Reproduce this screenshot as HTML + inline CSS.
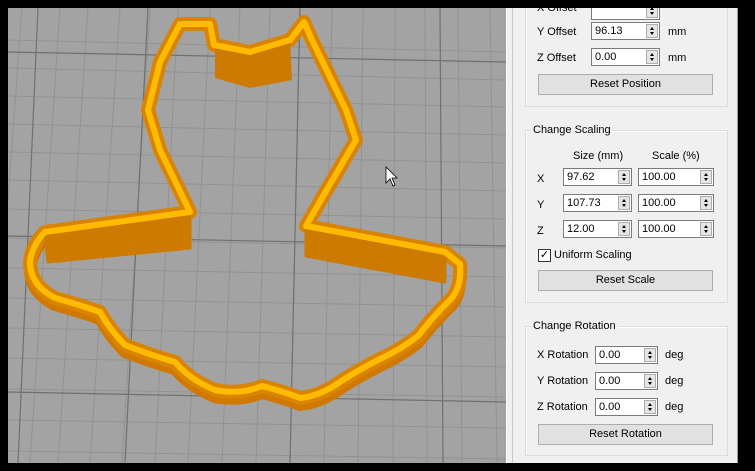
<!DOCTYPE html>
<html><head><style>
body{margin:0;width:755px;height:471px;background:#000;position:relative;overflow:hidden;font-family:"Liberation Sans",sans-serif;font-size:11px;color:#000}
.a{position:absolute}
#vp{left:8px;top:8px;width:498px;height:455px;background:#a3a3a3;overflow:hidden}
#pn{left:506px;top:8px;width:231px;height:455px;background:#f0f0f0;border-right:1px solid #999}
.g{position:absolute;border:1px solid #dcdcdc;box-shadow:inset 1px 1px 0 #fff}
.gl{position:absolute;background:#f0f0f0;padding:0 2px}
.in{position:absolute;background:#fff;border:1px solid #7a7a7a;height:18px;box-sizing:border-box;line-height:16px;padding-left:3px;font-size:11px}
.sp{position:absolute;right:1px;top:1px;width:12px;height:14px;border:1px solid #adadad;background:#e5e5e5;box-sizing:border-box}
.sp:before{content:"";position:absolute;left:3px;top:2px;border:2.5px solid transparent;border-bottom:3px solid #000;border-top:0}
.sp:after{content:"";position:absolute;left:3px;top:7px;border:2.5px solid transparent;border-top:3px solid #000;border-bottom:0}
.bt{position:absolute;left:32px;width:175px;height:21px;border:1px solid #adadad;background:#e1e1e1;box-sizing:border-box;text-align:center;line-height:19px;font-size:11px}
.t{position:absolute;font-size:11px}
</style></head><body>
<div id="vp" class="a">
<svg width="498" height="455" viewBox="8 8 498 455" style="position:absolute;left:0;top:0">
<g stroke="#929292" stroke-width="1" fill="none">
<path d="M22 8 L8 200 M60 8 L30 463 M120 8 L90 463 M178 8 L155 463 M240 8 L222 463 M300 8 L290 463 M363 8 L358 463 M425 8 L427 463 M490 8 L497 463 M88 8 L58 463 M150 8 L122 463 M210 8 L188 463 M270 8 L256 463 M332 8 L324 463 M395 8 L393 463 M458 8 L462 463"/>
<path d="M8 40 L506 52 M8 68 L506 80 M8 96 L506 107 M8 124 L506 135 M8 152 L506 163 M8 180 L506 191 M8 209 L506 219 M8 238 L506 248 M8 268 L506 277 M8 298 L506 307 M8 328 L506 337 M8 358 L506 367 M8 389 L506 397 M8 420 L506 428 M8 451 L506 459"/>
</g>
<g stroke="#707070" stroke-width="1.2" fill="none"><path d="M38 8 L18 463 M148 8 L125 463 M300 8 L290 463 M440 8 L443 463 M8 52 L506 62 M8 236 L506 246 M8 392 L506 402"/></g>
<g fill="none" stroke-linejoin="round" stroke-linecap="round">
<path d="M45 232 Q32 245 30 262 Q30 285 55 298 Q80 305 100 312 Q110 330 125 345 Q150 355 175 362 Q190 380 215 390 Q240 395 262 386 Q285 392 300 398 Q320 396 340 382 Q355 372 378 360 Q400 350 418 336 Q432 318 448 302 Q462 290 460 264" stroke="#d07800" stroke-width="12" transform="translate(0,7)"/>
<path d="M190 212 L45 232 Q32 245 30 262 Q30 285 55 298 Q80 305 100 312 Q110 330 125 345 Q150 355 175 362 Q190 380 215 390 Q240 395 262 386 Q285 392 300 398 Q320 396 340 382 Q355 372 378 360 Q400 350 418 336 Q432 318 448 302 Q462 290 460 264 L445 252 L306 226 L322 198 L356 140 L346 110 L312 40 L304 22 L290 40 L250 52 L214 45 L210 24 L180 24 L160 62 L148 110 L160 150 L190 212" stroke="#d98400" stroke-width="14"/>
<path d="M45 235 L190 214 L190 248 L48 262Z M306 228 L445 252 L445 282 L306 256Z" fill="#cc7a00" stroke="#cc7a00" stroke-width="3"/>
<path d="M215 45 L250 52 L290 40 L292 80 L250 88 L215 78Z" fill="#cc7a00" stroke="none"/>
<path d="M190 212 L45 232 Q32 245 30 262 Q30 285 55 298 Q80 305 100 312 Q110 330 125 345 Q150 355 175 362 Q190 380 215 390 Q240 395 262 386 Q285 392 300 398 Q320 396 340 382 Q355 372 378 360 Q400 350 418 336 Q432 318 448 302 Q462 290 460 264 L445 252 L306 226 L322 198 L356 140 L346 110 L312 40 L304 22 L290 40 L250 52 L214 45 L210 24 L180 24 L160 62 L148 110 L160 150 L190 212" stroke="#ffbb00" stroke-width="6"/>
</g>
<path d="M386 167 L386 183 L390 179 L393 186 L395 185 L392 178 L397 178Z" fill="#fff" stroke="#000" stroke-width="0.8"/>
</svg>
</div>
<div id="pn" class="a">
<div class="g" style="left:19px;top:-10px;width:201px;height:107px"></div>
<div class="t" style="left:31px;top:2px;transform:translateY(-8px)">X Offset</div>
<div class="in" style="left:85px;top:-6px;width:69px"><span class="sp"></span></div>
<div class="t" style="left:31px;top:18px">Y Offset</div>
<div class="in" style="left:85px;top:14px;width:69px">96.13<span class="sp"></span></div>
<div class="t" style="left:162px;top:18px">mm</div>
<div class="t" style="left:31px;top:44px">Z Offset</div>
<div class="in" style="left:85px;top:40px;width:69px">0.00<span class="sp"></span></div>
<div class="t" style="left:162px;top:44px">mm</div>
<div class="bt" style="top:66px">Reset Position</div>

<div class="g" style="left:19px;top:122px;width:201px;height:171px"></div>
<div class="gl" style="left:25px;top:116px">Change Scaling</div>
<div class="t" style="left:67px;top:142px">Size (mm)</div>
<div class="t" style="left:146px;top:142px">Scale (%)</div>
<div class="t" style="left:31px;top:165px">X</div>
<div class="in" style="left:57px;top:160px;width:69px">97.62<span class="sp"></span></div>
<div class="in" style="left:132px;top:160px;width:76px">100.00<span class="sp"></span></div>
<div class="t" style="left:31px;top:191px">Y</div>
<div class="in" style="left:57px;top:186px;width:69px">107.73<span class="sp"></span></div>
<div class="in" style="left:132px;top:186px;width:76px">100.00<span class="sp"></span></div>
<div class="t" style="left:31px;top:217px">Z</div>
<div class="in" style="left:57px;top:212px;width:69px">12.00<span class="sp"></span></div>
<div class="in" style="left:132px;top:212px;width:76px">100.00<span class="sp"></span></div>
<div class="a" style="left:32px;top:241px;width:13px;height:13px;border:1px solid #333;background:#fff;box-sizing:border-box;font-size:11px;line-height:11px;text-align:center">✓</div>
<div class="t" style="left:48px;top:241px">Uniform Scaling</div>
<div class="bt" style="top:262px">Reset Scale</div>

<div class="g" style="left:19px;top:318px;width:201px;height:128px"></div>
<div class="gl" style="left:25px;top:312px">Change Rotation</div>
<div class="t" style="left:31px;top:341px">X Rotation</div>
<div class="in" style="left:89px;top:338px;width:63px">0.00<span class="sp"></span></div>
<div class="t" style="left:159px;top:341px">deg</div>
<div class="t" style="left:31px;top:367px">Y Rotation</div>
<div class="in" style="left:89px;top:364px;width:63px">0.00<span class="sp"></span></div>
<div class="t" style="left:159px;top:367px">deg</div>
<div class="t" style="left:31px;top:393px">Z Rotation</div>
<div class="in" style="left:89px;top:390px;width:63px">0.00<span class="sp"></span></div>
<div class="t" style="left:159px;top:393px">deg</div>
<div class="bt" style="top:416px">Reset Rotation</div>
<div class="a" style="left:0;top:0;width:1px;height:455px;background:#fff"></div>
<div class="a" style="left:6px;top:0;width:1px;height:455px;background:#c8c8c8"></div>
</div>
<div class="a" style="left:0;top:0;width:755px;height:8px;background:#000"></div>
</body></html>
